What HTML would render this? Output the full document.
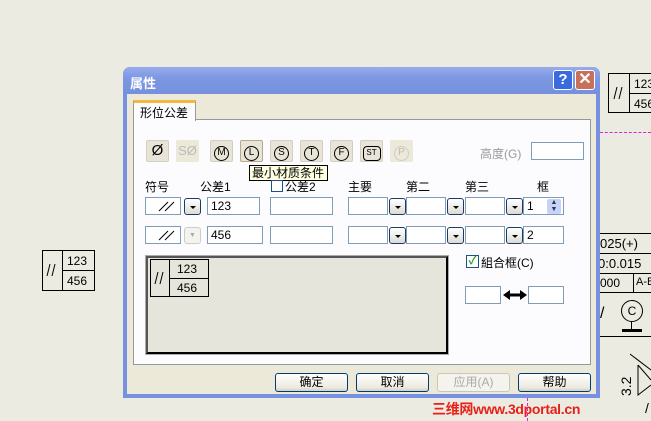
<!DOCTYPE html>
<html><head><meta charset="utf-8"><style>
*{margin:0;padding:0;box-sizing:border-box}
body{width:651px;height:421px;overflow:hidden;background:#ecebe2;position:relative;font-family:"Liberation Sans","Noto Sans CJK SC",sans-serif;font-size:12px;color:#000}
.a{position:absolute}
.inp{position:absolute;background:#fff;border:1px solid #7f9db9;height:18px;font-size:12px;line-height:16px;padding-left:3px}
.dd{position:absolute;width:17px;height:17px;border:1px solid #1c3a6e;border-radius:3px;background:linear-gradient(#fff,#dcdcd4);}
.dd:after{content:"";position:absolute;left:5px;top:7px;border:3px solid transparent;border-top:3px solid #000}
.ib{position:absolute;width:23px;height:22px;background:#e8e4d8;border:1px solid #d4cfc0;border-radius:2px;text-align:center;line-height:20px;font-size:13px}
.c{display:inline-block;width:15px;height:15px;border:1.5px solid #000;border-radius:50%;font-size:10px;line-height:12px;margin-top:3px}
.btn{position:absolute;height:19px;width:73px;border:1px solid #003c74;border-radius:3px;background:linear-gradient(#fff,#ece9de 80%,#d6d0c5);text-align:center;line-height:17px;font-size:12px}
.t{border:1px solid #000;position:absolute;background:transparent}
</style></head><body>
<div class="t" style="left:42px;top:250px;width:53px;height:41px"></div>
<div class="a" style="left:62px;top:250px;width:1px;height:41px;background:#000"></div>
<div class="a" style="left:62px;top:270px;width:33px;height:1px;background:#000"></div>
<svg class="a" style="left:44px;top:260px" width="16" height="20"><path d="M6 4 L3 16 M11 4 L8 16" stroke="#000"/></svg>
<div class="a" style="left:67px;top:254px">123</div>
<div class="a" style="left:67px;top:274px">456</div>

<div class="t" style="left:608px;top:73px;width:50px;height:40px"></div>
<div class="a" style="left:629px;top:73px;width:1px;height:40px;background:#000"></div>
<div class="a" style="left:629px;top:93px;width:30px;height:1px;background:#000"></div>
<svg class="a" style="left:611px;top:83px" width="16" height="20"><path d="M6 4 L3 16 M11 4 L8 16" stroke="#000"/></svg>
<div class="a" style="left:634px;top:77px">123</div>
<div class="a" style="left:634px;top:97px">456</div>
<div class="a" style="left:600px;top:132px;width:51px;border-top:1px dashed #e020e0"></div>
<div class="a" style="left:527px;top:398px;height:23px;border-left:1px dashed #e020e0"></div>

<div class="t" style="left:596px;top:233px;width:60px;height:60px"></div>
<div class="a" style="left:596px;top:253px;width:60px;height:1px;background:#000"></div>
<div class="a" style="left:596px;top:273px;width:60px;height:1px;background:#000"></div>
<div class="a" style="left:633px;top:273px;width:1px;height:20px;background:#000"></div>
<div class="a" style="left:600px;top:236px;font-size:13px">025(+)</div>
<div class="a" style="left:598px;top:256px;font-size:13px">0:0.015</div>
<div class="a" style="left:600px;top:276px;font-size:12px">000</div>
<div class="a" style="left:636px;top:276px;font-size:11px;white-space:nowrap">A-B</div>
<div class="a" style="left:621px;top:300px;width:22px;height:22px;border:1px solid #000;border-radius:50%;text-align:center;line-height:20px;font-size:12px">C</div>
<div class="a" style="left:631px;top:322px;width:1px;height:8px;background:#000"></div>
<div class="a" style="left:622px;top:329px;width:20px;height:3px;background:#000"></div>
<div class="a" style="left:598px;top:336px;width:53px;height:1px;background:#000"></div>
<div class="a" style="left:600px;top:305px;font-size:16px">/</div>
<div class="a" style="left:618px;top:396px;transform:rotate(-90deg);transform-origin:left top;font-size:14px">3.2</div>
<svg class="a" style="left:628px;top:350px" width="23" height="60"><path d="M2 4 L23 20 M10 15 L23 30 M10 15 L10 45 L23 35" stroke="#000" fill="none"/></svg>
<div class="a" style="left:645px;top:400px;font-size:14px">/</div>
<div class="a" style="left:432px;top:399px;font-size:14px;font-weight:bold;color:#e8201a;letter-spacing:-0.3px">三维网www.3dportal.cn</div>

<div class="a" style="left:123px;top:67px;width:477px;height:331px;border-radius:7px 7px 0 0;background:#7890e0"></div>
<div class="a" style="left:123px;top:67px;width:477px;height:27px;border-radius:7px 7px 0 0;background:linear-gradient(#97acec,#7d98e2 40%,#7590de)"></div>
<div class="a" style="left:130px;top:73px;color:#fff;font-weight:bold;font-size:13px">属性</div>
<div class="a" style="left:553px;top:70px;width:20px;height:20px;border:1px solid #fff;border-radius:3px;background:#3a6ae0;color:#fff;font-weight:bold;text-align:center;line-height:18px;font-size:15px">?</div>
<div class="a" style="left:575px;top:70px;width:20px;height:20px;border:1px solid #fff;border-radius:3px;background:#c8705c;color:#fff;font-weight:bold;text-align:center;line-height:18px;font-size:16px">✕</div>
<div class="a" style="left:127px;top:94px;width:469px;height:300px;background:#ece9d8"></div>
<div class="a" style="left:133px;top:119px;width:458px;height:246px;background:#fcfcfe;border:1px solid #919b9c"></div>
<div class="a" style="left:133px;top:100px;width:63px;height:21px;background:#fcfcfe;border:1px solid #919b9c;border-bottom:none;border-top:3px solid #f5b83c;padding:1px 0 0 6px;font-size:12px">形位公差</div>
<div class="ib" style="left:146px;top:140px;font-size:15px">Ø</div>
<div class="ib" style="left:176px;top:140px;color:#bbb;border-color:transparent;background:#ece9d8">SØ</div>
<div class="ib" style="left:210px;top:140px"><span class="c">M</span></div>
<div class="ib" style="left:240px;top:140px;border-color:#b8a890"><span class="c">L</span></div>
<div class="ib" style="left:270px;top:140px"><span class="c">S</span></div>
<div class="ib" style="left:300px;top:140px"><span class="c">T</span></div>
<div class="ib" style="left:330px;top:140px"><span class="c">F</span></div>
<div class="ib" style="left:360px;top:140px"><span class="c" style="border-radius:4px;width:18px;font-size:8px">ST</span></div>
<div class="ib" style="left:390px;top:140px;background:#ece9d8;border-color:transparent;color:#bbb"><span class="c" style="border-color:#ccc">P</span></div>
<div class="a" style="left:480px;top:145px;color:#999">高度(G)</div>
<div class="inp" style="left:531px;top:142px;width:53px"></div>
<div class="a" style="left:249px;top:165px;width:79px;height:16px;background:#ffffe1;border:1px solid #000;line-height:14px;padding-left:2px">最小材质条件</div>
<div class="a" style="left:145px;top:178px">符号</div>
<div class="a" style="left:200px;top:178px">公差1</div>
<div class="a" style="left:271px;top:180px;width:12px;height:12px;border:1px solid #1c5180;background:#fff"></div>
<div class="a" style="left:285px;top:178px">公差2</div>
<div class="a" style="left:348px;top:178px">主要</div>
<div class="a" style="left:406px;top:178px">第二</div>
<div class="a" style="left:465px;top:178px">第三</div>
<div class="a" style="left:537px;top:178px">框</div>
<!-- row1 -->
<div class="inp" style="left:145px;top:197px;width:36px"><svg width="30" height="16"><path d="M10 13 L19 4 M16 13 L25 4" stroke="#000"/></svg></div>
<div class="dd" style="left:184px;top:198px"></div>
<div class="inp" style="left:207px;top:197px;width:53px">123</div>
<div class="inp" style="left:270px;top:197px;width:63px"></div>
<div class="inp" style="left:348px;top:197px;width:40px"></div>
<div class="dd" style="left:389px;top:198px"></div>
<div class="inp" style="left:406px;top:197px;width:40px"></div>
<div class="dd" style="left:447px;top:198px"></div>
<div class="inp" style="left:465px;top:197px;width:40px"></div>
<div class="dd" style="left:506px;top:198px"></div>
<div class="inp" style="left:523px;top:197px;width:41px">1</div>
<div class="a" style="left:547px;top:199px;width:14px;height:15px;background:#c6d3f7;border-radius:2px;font-size:7px;text-align:center;line-height:7px;color:#335">▲<br>▼</div>
<!-- row2 -->
<div class="inp" style="left:145px;top:226px;width:36px"><svg width="30" height="16"><path d="M10 13 L19 4 M16 13 L25 4" stroke="#000"/></svg></div>
<div class="a" style="left:184px;top:227px;width:17px;height:17px;border:1px solid #ccc;border-radius:3px;background:#f4f3ee;color:#aaa;font-size:7px;text-align:center;line-height:15px">▼</div>
<div class="inp" style="left:207px;top:226px;width:56px">456</div>
<div class="inp" style="left:270px;top:226px;width:63px"></div>
<div class="inp" style="left:348px;top:226px;width:40px"></div>
<div class="dd" style="left:389px;top:227px"></div>
<div class="inp" style="left:406px;top:226px;width:40px"></div>
<div class="dd" style="left:447px;top:227px"></div>
<div class="inp" style="left:465px;top:226px;width:40px"></div>
<div class="dd" style="left:506px;top:227px"></div>
<div class="inp" style="left:523px;top:226px;width:41px">2</div>
<!-- preview -->
<div class="a" style="left:146px;top:256px;width:302px;height:98px;background:#e6e5dc;border:2px solid #000;border-top-color:#555;border-left-color:#555;outline:1px solid #aaa"></div>
<div class="t" style="left:150px;top:259px;width:59px;height:38px"></div>
<div class="a" style="left:169px;top:259px;width:1px;height:38px;background:#000"></div>
<div class="a" style="left:169px;top:278px;width:40px;height:1px;background:#000"></div>
<svg class="a" style="left:152px;top:268px" width="16" height="20"><path d="M6 4 L3 16 M11 4 L8 16" stroke="#000"/></svg>
<div class="a" style="left:177px;top:262px">123</div>
<div class="a" style="left:177px;top:281px">456</div>
<!-- right -->
<div class="a" style="left:466px;top:255px;width:13px;height:13px;border:1px solid #1c5180;background:#fff;color:#21a121;font-size:11px;line-height:11px;text-align:center;font-weight:bold">✓</div>
<div class="a" style="left:481px;top:254px">組合框(C)</div>
<div class="inp" style="left:465px;top:286px;width:36px"></div>
<svg class="a" style="left:502px;top:288px" width="26" height="14"><path d="M1 7 L8 2 L8 12 Z M25 7 L18 2 L18 12 Z" fill="#000"/><path d="M6 7 H20" stroke="#000" stroke-width="3"/></svg>
<div class="inp" style="left:528px;top:286px;width:36px"></div>
<div class="btn" style="left:275px;top:373px">确定</div>
<div class="btn" style="left:356px;top:373px">取消</div>
<div class="btn" style="left:437px;top:373px;border-color:#c9c7ba;color:#aaa;background:#f4f3ee">应用(A)</div>
<div class="btn" style="left:518px;top:373px">帮助</div>
</body></html>
